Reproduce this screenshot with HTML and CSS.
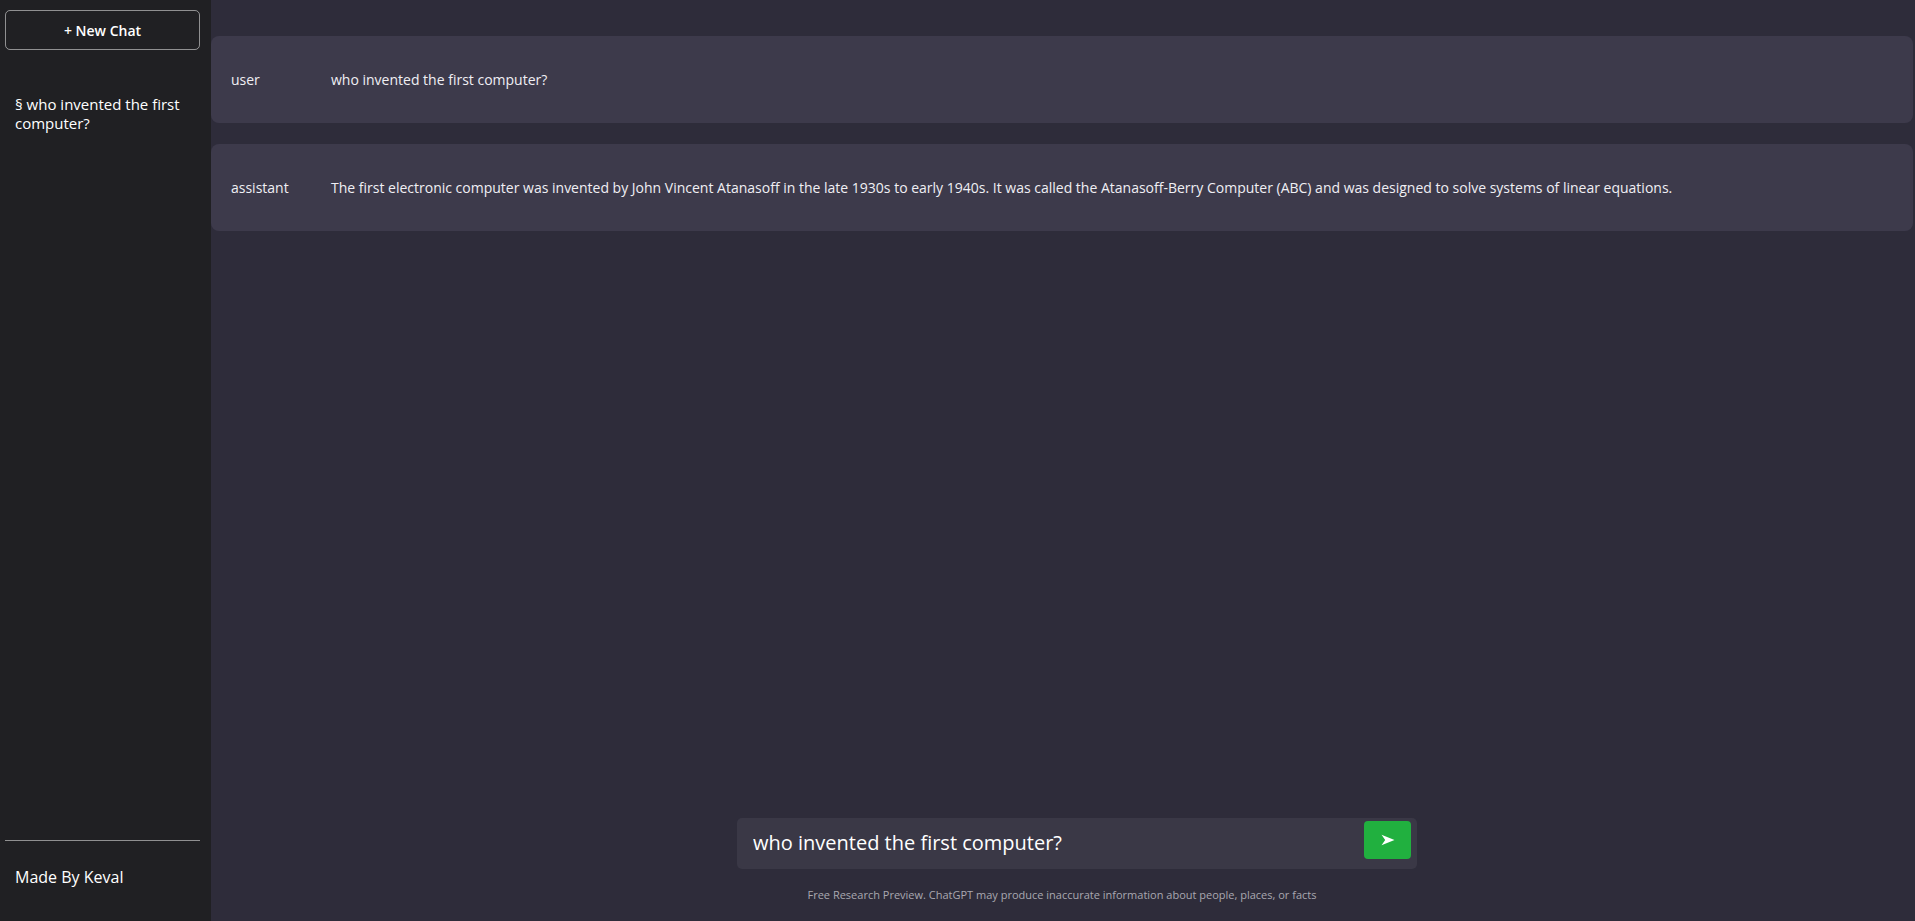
FILE: index.html
```html
<!DOCTYPE html>
<html lang="en">
<head>
<meta charset="utf-8">
<title>Chat</title>
<link rel="stylesheet" href="styles.css">
</head>
<body>
<div class="app">
  <aside class="sidebar">
    <button class="new-chat">+ New Chat</button>
    <ul class="history">
      <li>§ who invented the first computer?</li>
    </ul>
    <nav class="sidebar-foot">
      <p>Made By Keval</p>
    </nav>
  </aside>
  <main class="main">
    <div class="feed">
      <div class="msg">
        <p class="role">user</p>
        <p class="text">who invented the first computer?</p>
      </div>
      <div class="msg">
        <p class="role">assistant</p>
        <p class="text">The first electronic computer was invented by John Vincent Atanasoff in the late 1930s to early 1940s. It was called the Atanasoff-Berry Computer (ABC) and was designed to solve systems of linear equations.</p>
      </div>
    </div>
    <div class="bottom">
      <div class="input-box">
        <input class="input" type="text" value="who invented the first computer?">
        <button class="send" aria-label="Send">
          <svg width="14" height="12" viewBox="0 0 14 12"><path d="M0.5 0.8 L13.5 6 L0.5 11.2 L4.2 6 Z" fill="#fff"/></svg>
        </button>
      </div>
      <p class="info">Free Research Preview. ChatGPT may produce inaccurate information about people, places, or facts</p>
    </div>
  </main>
</div>
</body>
</html>
```
FILE: styles.css
```css
* { box-sizing: border-box; }
html, body { margin: 0; padding: 0; height: 100%; overflow: hidden; }
body {
  font-family: "Open Sans", "Noto Sans", sans-serif;
  background: #2e2c3a;
  color: #fff;
}
.app {
  display: flex;
  height: 921px;
}
.sidebar {
  width: 211px;
  flex: 0 0 211px;
  background: #202023;
  display: flex;
  flex-direction: column;
  padding: 10px 11px 0 5px;
}
.new-chat {
  width: 195px;
  height: 40px;
  background: transparent;
  border: 1px solid rgba(255,255,255,0.5);
  border-radius: 5px;
  color: #fff;
  font-family: inherit;
  font-size: 14px;
  font-weight: 600;
}
.history {
  list-style: none;
  margin: 0;
  padding: 0 0 0 10px;
  flex: 1;
}
.history li {
  margin-top: 45px;
  font-size: 15px;
  line-height: 19px;
}
.sidebar-foot {
  border-top: 1px solid rgba(255,255,255,0.5);
  height: 81px;
  padding: 0 10px;
}
.sidebar-foot p {
  margin: 25px 0 0;
  font-size: 16px;
  line-height: 22px;
}
.main {
  flex: 1;
  display: flex;
  flex-direction: column;
  justify-content: space-between;
  padding: 36px 2px 0 0;
}
.feed {
  display: flex;
  flex-direction: column;
  gap: 21px;
}
.msg {
  display: flex;
  align-items: center;
  background: #3d3a4b;
  border-radius: 8px;
  height: 87px;
  padding: 0 20px;
  font-size: 14px;
  color: #f0eff4;
}
.msg p { margin: 0; }
.role {
  width: 100px;
  flex: 0 0 100px;
}
.bottom {
  display: flex;
  flex-direction: column;
  align-items: center;
  padding-bottom: 19px;
}
.input-box {
  width: 680px;
  height: 51px;
  margin-left: 30px;
  background: #3a3846;
  border-radius: 5px;
  display: flex;
  align-items: center;
  padding: 0 6px 0 16px;
}
.input {
  flex: 1;
  background: transparent;
  border: none;
  outline: none;
  color: #fff;
  font-family: inherit;
  font-size: 20px;
  padding: 0;
  margin-top: -2px;
}
.send {
  width: 47px;
  height: 38px;
  border: none;
  border-radius: 4px;
  background: #21b03f;
  display: flex;
  align-items: center;
  justify-content: center;
  padding: 0;
  margin-top: -8px;
}
.info {
  margin: 18px 0 0;
  font-size: 11px;
  line-height: 15px;
  color: #a9a8b0;
}
```
